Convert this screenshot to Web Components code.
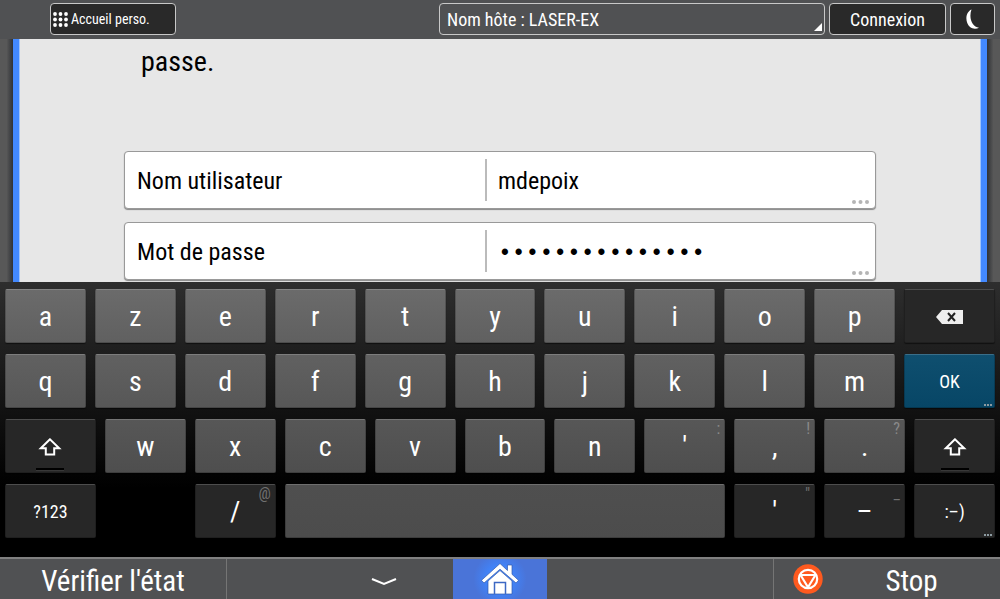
<!DOCTYPE html>
<html lang="fr">
<head>
<meta charset="utf-8">
<title>Connexion</title>
<style>
    body {
        margin: 0;
        height: 100vh;
        display: flex;
        flex-direction: column;
        overflow: hidden;
        background: #505153;
        font-family: "Roboto Condensed", "Open Sans Condensed Light", "Noto Sans", sans-serif;
    }
</style>
</head>
<body>
    <top-bar host="LASER-EX"></top-bar>
    <login-panel>
        <span slot="message">passe.</span>
        <field-row label="Nom utilisateur" type="text" value="mdepoix"></field-row>
        <field-row label="Mot de passe" type="password" value="motdepasse12345"></field-row>
    </login-panel>
    <touch-keyboard></touch-keyboard>
    <status-bar></status-bar>

<script>
class TopBar extends HTMLElement {
    constructor() {
        super();
        this.attachShadow({ mode: 'open' });
    }

    connectedCallback() {
        this.shadowRoot.innerHTML = `
            <style>
                :host {
                    display: flex;
                    flex: none;
                    gap: 4px;
                    height: 39px;
                    padding: 3px 5px 4px 50px;
                    box-sizing: border-box;
                    background: #505153;
                    color: #fff;
                }

                button, select {
                    box-sizing: border-box;
                    height: 32px;
                    margin: 0;
                    border: 1px solid #c8c8c8;
                    border-radius: 4px;
                    background: #292929;
                    color: inherit;
                    font: inherit;
                    font-size: 18px;
                }

                .home {
                    display: flex;
                    align-items: center;
                    gap: 3px;
                    width: 126px;
                    padding: 0 2px;
                    font-size: 14px;
                }

                .host {
                    position: relative;
                    width: 386px;
                    margin-left: auto;
                }

                select {
                    width: 100%;
                    padding: 0 7px;
                    appearance: none;
                    background: transparent;
                }

                .corner {
                    position: absolute;
                    right: 3px;
                    bottom: 4px;
                    pointer-events: none;
                }

                .login { width: 117px; padding: 0; }
                .sleep { width: 45px; padding: 0; }
                svg { display: block; }
                .sleep svg { margin: 0 auto; }
            </style>

            <button class="home" type="button">
                <svg width="15" height="15" viewBox="0 0 15 15" fill="#fff">
                    <circle cx="2" cy="2" r="1.900"/><circle cx="7.500" cy="2" r="1.900"/><circle cx="13" cy="2" r="1.900"/>
                    <circle cx="2" cy="7.500" r="1.900"/><circle cx="7.500" cy="7.500" r="1.900"/><circle cx="13" cy="7.500" r="1.900"/>
                    <circle cx="2" cy="13" r="1.900"/><circle cx="7.500" cy="13" r="1.900"/><circle cx="13" cy="13" r="1.900"/>
                </svg>
                Accueil perso.
            </button>
            <div class="host">
                <select aria-label="Nom hôte">
                    <option>Nom hôte : ${this.getAttribute('host')}</option>
                </select>
                <svg class="corner" width="8" height="8" viewBox="0 0 8 8"><path d="M8 0v8H0z" fill="#fff"/></svg>
            </div>
            <button class="login" type="button">Connexion</button>
            <button class="sleep" type="button" aria-label="Veille">
                <svg width="14" height="20" viewBox="0 0 14 20"><path d="M5.500 .5C-.5 3-1.500 13 4 18c2.500 2.200 6.500 2 9 .8C6 17.500 2.500 9 5.500 .5z" fill="#fff"/></svg>
            </button>
        `;
    }
}

class LoginPanel extends HTMLElement {
    constructor() {
        super();
        this.attachShadow({ mode: 'open' });
        this.shadowRoot.innerHTML = `
            <style>
                :host {
                    display: flex;
                    flex: 1;
                    min-height: 0;
                    overflow: hidden;
                    color: #000;
                }

                .edge {
                    flex: none;
                    width: 13px;
                    background: linear-gradient(to right, #585858 50%, #303236);
                }

                .edge:last-child { background: linear-gradient(to left, #585858 50%, #303236); }

                form {
                    flex: 1;
                    box-sizing: border-box;
                    display: flex;
                    flex-direction: column;
                    gap: 13px;
                    padding: 0 105px;
                    border: solid #4389ff;
                    border-width: 0 6px;
                    box-shadow: inset 1px 0 #9fc3fb, inset -1px 0 #9fc3fb;
                    background: #e7e7e7;
                }

                .message {
                    height: 99px;
                    margin: 0;
                    padding: 5px 17px 0;
                    box-sizing: border-box;
                    font-size: 28px;
                    line-height: 36px;
                }
            </style>

            <div class="edge"></div>
            <form>
                <p class="message"><slot name="message"></slot></p>
                <slot></slot>
            </form>
            <div class="edge"></div>
        `;
    }
}

class FieldRow extends HTMLElement {
    constructor() {
        super();
        this.attachShadow({ mode: 'open' });
    }

    connectedCallback() {
        this.shadowRoot.innerHTML = `
            <style>
                :host {
                    position: relative;
                    display: flex;
                    align-items: center;
                    flex: none;
                    height: 58px;
                    box-sizing: border-box;
                    border: 1px solid #999;
                    border-radius: 4px;
                    box-shadow: 0 1px 1px #888;
                    background: #fff;
                    font-size: 24px;
                }

                label {
                    width: 48%;
                    box-sizing: border-box;
                    padding: 2px 0 0 12px;
                    line-height: 40px;
                }

                input {
                    width: 52%;
                    height: 42px;
                    box-sizing: border-box;
                    margin: 0;
                    padding: 2px 11px 0;
                    border: 0;
                    border-left: 2px solid #bbb;
                    outline: 0;
                    background: none;
                    color: inherit;
                    font: inherit;
                }

                input[type=password] {
                    padding-top: 6px;
                    font-family: "Liberation Mono", monospace;
                    font-size: 23px;
                }

                svg { position: absolute; right: 6px; bottom: 4px; }
            </style>

            <label for="field">${this.getAttribute('label')}</label>
            <input id="field" autocomplete="off" type="${this.getAttribute('type')}" value="${this.getAttribute('value')}">
            <svg width="17" height="4" viewBox="0 0 17 4" fill="#b5b5b5"><circle cx="2" cy="2" r="2"/><circle cx="8.500" cy="2" r="2"/><circle cx="15" cy="2" r="2"/></svg>
        `;
    }
}

class KeyCap extends HTMLElement {
    constructor() {
        super();
        this.attachShadow({ mode: 'open' });
    }

    connectedCallback() {
        const hint = this.getAttribute('hint');
        this.shadowRoot.innerHTML = `
            <style>
                :host { display: flex; flex: 81 1 0; min-width: 0; }
                :host([wide]) { flex-grow: 91; }
                :host([space]) { flex-grow: 441; }

                button {
                    position: relative;
                    flex: 1;
                    min-width: 0;
                    height: 54px;
                    padding: 2px 0 0;
                    border: 1px solid rgba(0, 0, 0, .2);
                    border-top-color: rgba(255, 255, 255, .18);
                    border-radius: 2px;
                    background: var(--key, #5b5b5b) border-box;
                    box-shadow: 0 1px 1px rgba(0, 0, 0, .5);
                    color: #fff;
                    font: inherit;
                    font-size: 28px;
                    line-height: 50px;
                }

                :host([dark]) button { background: #272727; }
                :host([ok]) button { background: linear-gradient(#0f4f6f, #074666) border-box; }
                :host([small]) button { font-size: 18px; }

                .hint {
                    position: absolute;
                    top: 0;
                    right: 4px;
                    color: #8a8a8a;
                    font-size: 16px;
                    line-height: 18px;
                }

                :host([dark]) .hint { color: #707070; }

                .more { position: absolute; right: 2px; bottom: 1px; }
                .lock {
                    position: absolute;
                    left: 50%;
                    bottom: 1px;
                    width: 28px;
                    height: 2px;
                    margin-left: -14px;
                    border-bottom: 1px solid #383838;
                    background: #000;
                }

                ::slotted(svg) { display: block; margin: 0 auto; }
            </style>

            <button type="button" ${this.hasAttribute('name') ? `aria-label="${this.getAttribute('name')}"` : ''}>
                <slot></slot>
                ${hint ? `<span class="hint">${hint === '"' ? '&quot;' : hint}</span>` : ''}
                ${this.hasAttribute('more') ? '<svg class="more" width="8" height="2" viewBox="0 0 8 2" fill="#8c9aa0"><path d="M0 0h2v2H0zM3 0h2v2H3zM6 0h2v2H6z"/></svg>' : ''}
                ${this.hasAttribute('lock') ? '<span class="lock"></span>' : ''}
            </button>
        `;
    }
}

const SHIFT = '<svg width="24" height="20" viewBox="0 0 24 20"><path d="M12 2.300L2.800 11.300H7.800V17.500H16.200V11.300H21.200z" fill="none" stroke="#fff" stroke-width="2"/></svg>';
const BACKSPACE = '<svg width="27" height="14" viewBox="0 0 27 14"><path d="M0 7l6-7h21v14H6z" fill="#eee"/><path d="M12 3l7 8M19 3l-7 8" stroke="#222" stroke-width="2"/></svg>';

class TouchKeyboard extends HTMLElement {
    constructor() {
        super();
        this.attachShadow({ mode: 'open' });
        const letters = (text) => [...text].map((c) => `<key-cap>${c}</key-cap>`).join('');
        this.shadowRoot.innerHTML = `
            <style>
                :host {
                    display: flex;
                    flex: none;
                    flex-direction: column;
                    gap: 11px;
                    padding: 7px 5px 19px;
                    background: linear-gradient(#2e2e2e, #000 75%);
                }

                .row { display: flex; gap: 9px; }
                .row:nth-of-type(1) { --key: linear-gradient(#6b6b6b, #606060); }
                .row:nth-of-type(2) { --key: linear-gradient(#616161, #575757); }
                .row:nth-of-type(3) { --key: linear-gradient(#575757, #4e4e4e); }
                .row:nth-of-type(4) { --key: linear-gradient(#4f4f4f, #4c4c4c); }
                .blank { flex: 81 1 0; }
            </style>

            <div class="row">
                ${letters('azertyuiop')}
                <key-cap wide dark name="Effacer">${BACKSPACE}</key-cap>
            </div>
            <div class="row">
                ${letters('qsdfghjklm')}
                <key-cap wide ok small more>OK</key-cap>
            </div>
            <div class="row">
                <key-cap wide dark lock name="Maj gauche">${SHIFT}</key-cap>
                ${letters('wxcvbn')}
                <key-cap hint=":">'</key-cap>
                <key-cap hint="!">,</key-cap>
                <key-cap hint="?">.</key-cap>
                <key-cap dark lock name="Maj droite">${SHIFT}</key-cap>
            </div>
            <div class="row">
                <key-cap wide dark small>?123</key-cap>
                <div class="blank"></div>
                <key-cap dark hint="@">/</key-cap>
                <key-cap space name="Espace"></key-cap>
                <key-cap dark hint="&quot;">'</key-cap>
                <key-cap dark hint="_">–</key-cap>
                <key-cap dark small more>:–)</key-cap>
            </div>
        `;
    }
}

class StatusBar extends HTMLElement {
    constructor() {
        super();
        this.attachShadow({ mode: 'open' });
        this.shadowRoot.innerHTML = `
            <style>
                :host {
                    display: grid;
                    flex: none;
                    grid-template-columns: 227fr 226fr 94fr 226fr 227fr;
                    height: 42px;
                    box-sizing: border-box;
                    border-top: 2px solid #808080;
                    background: #505153;
                    color: #fff;
                }

                button {
                    display: flex;
                    align-items: center;
                    justify-content: center;
                    min-width: 0;
                    margin: 0;
                    padding: 0;
                    border: 0;
                    background: none;
                    color: inherit;
                    font: inherit;
                    font-size: 29px;
                    line-height: 36px;
                }

                span { padding-top: 4px; }
                .status { border-right: 1px solid #757575; }
                .hide { justify-content: flex-end; padding: 6px 56px 0 0; }
                .home { background: radial-gradient(circle, #3f86ff 20%, #4a74d8 52%); }
                .stop { justify-content: flex-start; border-left: 1px solid #757575; padding-left: 19px; }
                .stop span { flex: 1; text-align: center; }
            </style>

            <button class="status" type="button"><span>Vérifier l'état</span></button>
            <button class="hide" type="button" aria-label="Masquer le clavier">
                <svg width="26" height="10" viewBox="0 0 26 10"><path d="M1 2l12 5 12-5" fill="none" stroke="#fff" stroke-width="2"/></svg>
            </button>
            <button class="home" type="button" aria-label="Accueil">
                <svg width="38" height="32" viewBox="0 0 38 32" fill="#fff" stroke="#3159ad" stroke-width=".7">
                    <path d="M19 7.500L31 18V31H7V18z"/>
                    <path d="M13.500 31V19.500h11V31" fill="none" stroke="#3c68c4" stroke-width="1.500"/>
                    <path d="M19 .5l7.500 7V2h4.500v9.300l6.500 6-2.500 2.700L19 6.200 3 20 .5 17.300z"/>
                </svg>
            </button>
            <span></span>
            <button class="stop" type="button">
                <svg width="30" height="30" viewBox="0 0 30 30" fill="none" stroke="#fff" stroke-width="2.200">
                    <circle cx="15" cy="15" r="14.700" fill="#ff5a1f" stroke="none"/>
                    <circle cx="15" cy="15" r="9.200"/>
                    <path d="M7.500 11h15L15 23.300z" stroke-linejoin="round"/>
                </svg>
                <span>Stop</span>
            </button>
        `;
    }
}

customElements.define('top-bar', TopBar);
customElements.define('login-panel', LoginPanel);
customElements.define('field-row', FieldRow);
customElements.define('key-cap', KeyCap);
customElements.define('touch-keyboard', TouchKeyboard);
customElements.define('status-bar', StatusBar);
</script>
</body>
</html>
